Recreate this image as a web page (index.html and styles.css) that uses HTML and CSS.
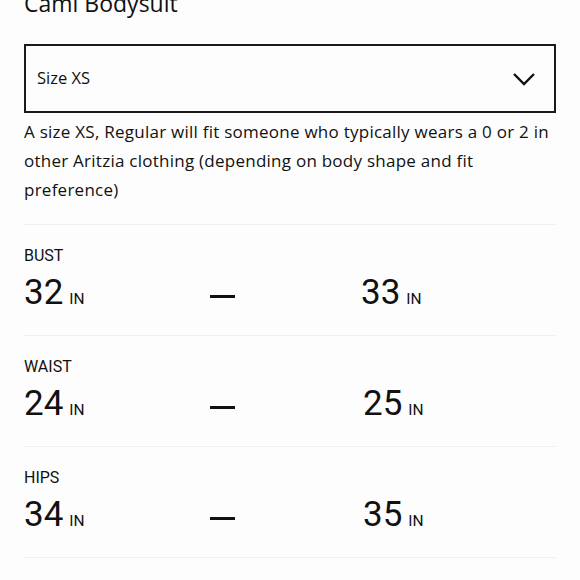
FILE: index.html
```html
<!DOCTYPE html>
<html>
<head>
<meta charset="utf-8">
<link rel="stylesheet" href="styles.css">
</head>
<body>
<div class="page">
  <h1 class="title">Cami Bodysuit</h1>
  <div class="select">
    <span class="select-label">Size XS</span>
    <svg class="chevron" width="24" height="16" viewBox="0 0 24 16"><path d="M2 3 L12 13 L22 3" fill="none" stroke="#111" stroke-width="2.4"/></svg>
  </div>
  <p class="desc">A size XS, Regular will fit someone who typically wears a 0 or 2 in other Aritzia clothing (depending on body shape and fit preference)</p>
  <div class="measure">
    <div class="m-label">BUST</div>
    <div class="m-row"><span class="num">32<small>IN</small></span><span class="dash"></span><span class="num">33<small>IN</small></span></div>
  </div>
  <div class="measure">
    <div class="m-label">WAIST</div>
    <div class="m-row"><span class="num">24<small>IN</small></span><span class="dash"></span><span class="num alt">25<small>IN</small></span></div>
  </div>
  <div class="measure">
    <div class="m-label">HIPS</div>
    <div class="m-row"><span class="num">34<small>IN</small></span><span class="dash"></span><span class="num alt">35<small>IN</small></span></div>
  </div>
</div>
</body>
</html>
```
FILE: styles.css
```css
html, body { margin: 0; padding: 0; background: #fdfdfd; }
body { font-family: "Open Sans", "Liberation Sans", sans-serif; color: #111; }
.page { padding: 0 24px; width: 532px; }
.title { font-size: 23px; font-weight: 400; margin: -11px 0 0; line-height: 28px; }
.select { margin-top: 27px; height: 69px; box-sizing: border-box; border: 2px solid #1a1a1a; display: flex; align-items: center; justify-content: space-between; padding: 0 18px 0 11px; }
.select-label { font-size: 16.5px; position: relative; top: -1px; }
.chevron { display: block; }
.desc { margin: 4px 0 0; font-size: 17px; letter-spacing: 0.25px; line-height: 29px; padding-bottom: 20px; border-bottom: 1px solid #efefef; }
.measure { height: 111px; border-bottom: 1px solid #efefef; font-family: Roboto, "Liberation Sans", sans-serif; padding-top: 20px; box-sizing: border-box; }
.m-label { font-size: 16px; line-height: 22px; }
.m-row { display: grid; grid-template-columns: 186px 151px auto; align-items: center; margin-top: 6px; }
.num { font-size: 35px; line-height: 40px; }
.num small { font-size: 15.5px; margin-left: 6px; }
.num.alt { padding-left: 2px; }
.dash { width: 25px; height: 3px; background: #111; }
```
